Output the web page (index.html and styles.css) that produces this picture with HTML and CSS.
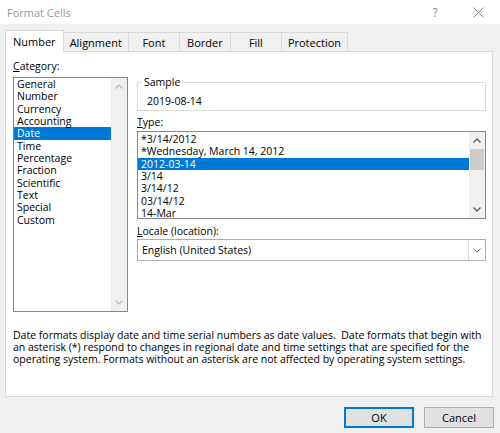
FILE: index.html
```html
<!DOCTYPE html>
<html>
<head>
<meta charset="utf-8">
<link rel="stylesheet" href="styles.css">
</head>
<body>
<div class="titlebar">
  <span class="title">Format Cells</span>
  <span class="help">?</span>
  <span class="close"><svg width="11" height="11" viewBox="0 0 11 11"><path d="M0.5 0.5 L10.5 10.5 M10.5 0.5 L0.5 10.5" stroke="#8c8c8c" stroke-width="1" fill="none"/></svg></span>
</div>
<div class="tabs">
  <div class="tab active">Number</div>
  <div class="tab">Alignment</div>
  <div class="tab">Font</div>
  <div class="tab">Border</div>
  <div class="tab">Fill</div>
  <div class="tab">Protection</div>
</div>
<div class="panel">
  <div class="main">
    <div class="cat">
      <div class="label"><u>C</u>ategory:</div>
      <div class="listbox cat-list">
        <ul class="items">
          <li>General</li>
          <li>Number</li>
          <li>Currency</li>
          <li>Accounting</li>
          <li class="sel">Date</li>
          <li>Time</li>
          <li>Percentage</li>
          <li>Fraction</li>
          <li>Scientific</li>
          <li>Text</li>
          <li>Special</li>
          <li>Custom</li>
        </ul>
        <div class="scrollbar disabled">
          <span class="arrow"><svg width="8" height="5" viewBox="0 0 8 5"><polyline points="0.5,4.5 4,1 7.5,4.5" fill="none" stroke="#bcbcbc" stroke-width="1.2"/></svg></span>
          <span class="track"></span>
          <span class="arrow"><svg width="8" height="5" viewBox="0 0 8 5"><polyline points="0.5,0.5 4,4 7.5,0.5" fill="none" stroke="#bcbcbc" stroke-width="1.2"/></svg></span>
        </div>
      </div>
    </div>
    <div class="right">
      <fieldset class="sample">
        <legend>Sample</legend>
        <div class="sample-value">2019-08-14</div>
      </fieldset>
      <div class="label type-label"><u>T</u>ype:</div>
      <div class="listbox type-list">
        <ul class="items">
          <li>*3/14/2012</li>
          <li>*Wednesday, March 14, 2012</li>
          <li class="sel">2012-03-14</li>
          <li>3/14</li>
          <li>3/14/12</li>
          <li>03/14/12</li>
          <li>14-Mar</li>
        </ul>
        <div class="scrollbar">
          <span class="arrow"><svg width="8" height="5" viewBox="0 0 8 5"><polyline points="0.5,4.5 4,1 7.5,4.5" fill="none" stroke="#606060" stroke-width="1.4"/></svg></span>
          <span class="track"><span class="thumb"></span></span>
          <span class="arrow"><svg width="8" height="5" viewBox="0 0 8 5"><polyline points="0.5,0.5 4,4 7.5,0.5" fill="none" stroke="#606060" stroke-width="1.4"/></svg></span>
        </div>
      </div>
      <div class="label locale-label"><u>L</u>ocale (location):</div>
      <div class="combo">
        <span class="combo-text">English (United States)</span>
        <span class="drop"><svg width="8" height="5" viewBox="0 0 8 5"><polyline points="0.5,0.5 4,4 7.5,0.5" fill="none" stroke="#7a7a7a" stroke-width="1"/></svg></span>
      </div>
    </div>
  </div>
  <p class="desc">Date formats display date and time serial numbers as date values.&nbsp; Date formats that begin with<br>an asterisk (*) respond to changes in regional date and time settings that are specified for the<br>operating system. Formats without an asterisk are not affected by operating system settings.</p>
</div>
<div class="footer">
  <button class="btn default">OK</button>
  <button class="btn">Cancel</button>
</div>
</body>
</html>
```
FILE: styles.css
```css
* { box-sizing: border-box; }
html, body { margin: 0; padding: 0; }
body {
  width: 500px;
  height: 433px;
  overflow: hidden;
  background: #f0f0f0;
  font-family: "Open Sans", "Noto Sans", sans-serif;
  font-size: 10.5px;
  color: #000;
}

/* title bar */
.titlebar {
  height: 24px;
  background: #fff;
  display: flex;
  align-items: center;
  padding-left: 7px;
}
.title { flex: 1; color: #999; font-size: 11px; }
.help { color: #8c8c8c; font-size: 12px; width: 12px; margin-right: 32px; text-align: center; }
.close { width: 11px; height: 11px; margin-right: 16px; display: flex; }

/* tabs */
.tabs {
  height: 27px;
  display: flex;
  align-items: flex-end;
  padding-left: 5px;
}
.tab {
  height: 19px;
  min-width: 52px;
  padding: 0 6px;
  border: 1px solid #d9d9d9;
  border-bottom: none;
  margin-left: -1px;
  display: flex;
  align-items: center;
  justify-content: center;
  background: #f0f0f0;
  font-size: 11px;
}
.tab.active {
  margin-left: 0;
  height: 22px;
  margin-bottom: -1px;
  padding: 0 7px;
  background: #fff;
  position: relative;
  z-index: 1;
}

/* panel */
.panel {
  margin: 0 7px 0 5px;
  height: 346px;
  border: 1px solid #d9d9d9;
  background: #fff;
  padding: 7px 6px 0 7px;
}
.main { display: flex; gap: 9px; }
.label { height: 14px; line-height: 14px; }
.cat { width: 115px; }
.cat .label { margin-bottom: 4px; }

.listbox {
  border: 1px solid #828790;
  display: flex;
  background: #fff;
}
.items {
  list-style: none;
  margin: 0;
  padding: 0;
  flex: 1;
}
.items li {
  height: 12.33px;
  line-height: 12.33px;
  padding-left: 3px;
  white-space: nowrap;
}
.items li.sel { background: #0078d7; color: #fff; }

.scrollbar {
  width: 16px;
  background: #f0f0f0;
  display: flex;
  flex-direction: column;
}
.scrollbar .arrow {
  height: 17px;
  display: flex;
  align-items: center;
  justify-content: center;
}
.scrollbar .track { flex: 1; display: flex; flex-direction: column; padding: 0 1px; }
.thumb { height: 21px; background: #cdcdcd; }

.cat-list { height: 235px; }

.right { flex: 1; padding-top: 16px; }
.sample {
  margin: 0;
  border: 1px solid #dcdcdc;
  padding: 0 0 0 4px;
  min-width: 0;
  height: 36px;
}
.sample legend { padding: 0 2px; line-height: 14px; }
.sample-value { padding-left: 5px; line-height: 14px; margin-top: 5px; }

.type-label { margin-top: 4px; margin-bottom: 2px; }
.type-list { height: 88px; }
.type-list .items { padding-top: 1px; }

.locale-label { margin-top: 5px; margin-bottom: 1px; }
.combo {
  height: 22px;
  border: 1px solid #adadad;
  display: flex;
  align-items: stretch;
}
.combo-text { flex: 1; padding-left: 4px; line-height: 20px; }
.drop {
  width: 17px;
  border-left: 1px solid #dadada;
  display: flex;
  align-items: center;
  justify-content: center;
}

.desc {
  margin: 17px 0 0 0;
  line-height: 12px;
  white-space: nowrap;
}

/* footer */
.footer {
  display: flex;
  justify-content: flex-end;
  gap: 10px;
  padding: 10px 6px 0 0;
}
.btn {
  width: 70px;
  height: 21px;
  font-family: inherit;
  font-size: 11px;
  color: #000;
  background: #e1e1e1;
  border: 1px solid #adadad;
  padding: 0;
  margin: 0;
}
.btn.default { border-color: #0078d7; box-shadow: inset 0 0 0 1px #0078d7; }
```
